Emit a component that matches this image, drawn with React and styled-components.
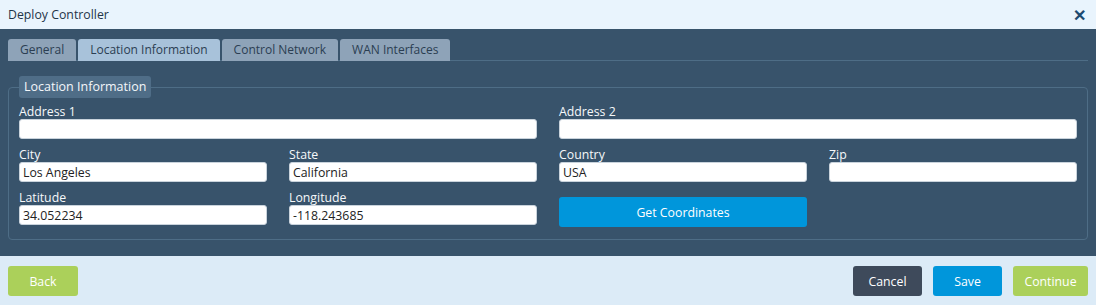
import React from 'react';
import styled, { createGlobalStyle } from 'styled-components';

const GlobalStyle = createGlobalStyle`
  html, body {
    margin: 0;
    padding: 0;
    background: #dcebf7;
  }
  body {
    font-family: "Open Sans", "Liberation Sans", sans-serif;
    font-size: 12px;
  }
`;

const Dialog = styled.div`
  width: 1096px;
  height: 305px;
  display: flex;
  flex-direction: column;
`;

const Header = styled.div`
  height: 29px;
  background: #e9f4fd;
  display: flex;
  align-items: center;
  justify-content: space-between;
  padding: 0 8px;
  color: #1f3448;
  font-size: 12.3px;
`;

const Close = styled.span`
  font-size: 16px;
  font-weight: bold;
  color: #1d4a70;
  line-height: 1;
  margin-right: 2px;
`;

const Body = styled.div`
  background: #38536b;
  padding: 10px 8px 0;
  height: 227px;
  box-sizing: border-box;
`;

const TabStrip = styled.div`
  display: flex;
  gap: 2px;
  border-bottom: 1px solid #4e6d86;
  height: 21px;
`;

const Tab = styled.div`
  height: 22px;
  line-height: 22px;
  padding: 0 12px;
  border-radius: 3px 3px 0 0;
  background: ${p => (p.$active ? '#a8c2da' : '#8ea3b8')};
  color: #2b3e52;
  font-size: 12px;
`;

const Fieldset = styled.fieldset`
  margin: 15px 0 0;
  border: 1px solid #4e6d86;
  border-radius: 4px;
  padding: 6px 10px 12px;
`;

const Legend = styled.legend`
  background: #4f6d87;
  color: #f4f7fa;
  border-radius: 3px;
  padding: 0 5px;
  height: 22px;
  line-height: 22px;
  font-size: 12.5px;
`;

const Grid = styled.div`
  display: grid;
  grid-template-columns: repeat(4, 248px);
  column-gap: 22px;
  row-gap: 8px;
`;

const Field = styled.div`
  grid-column: span ${p => p.$span || 1};
  display: flex;
  flex-direction: column;
`;

const Label = styled.label`
  color: #f6f8fa;
  font-size: 12.3px;
  line-height: 15px;
`;

const Input = styled.input`
  height: 20px;
  box-sizing: border-box;
  border: 1px solid #c9d3dc;
  border-radius: 3px;
  background: #fff;
  padding: 0 3px;
  font-family: inherit;
  font-size: 12.3px;
  color: #222;
  outline: none;
`;

const Button = styled.button`
  height: 30px;
  border: none;
  border-radius: 3px;
  color: #fff;
  font-family: inherit;
  font-size: 12.3px;
  padding: 0;
  width: ${p => p.$w}px;
  background: ${p => p.$bg};
  cursor: pointer;
`;

const CoordCell = styled.div`
  display: flex;
  padding-top: 7px;
  ${Button} { width: 100%; }
`;

const Footer = styled.div`
  flex: 1;
  background: #dcebf7;
  display: flex;
  align-items: flex-start;
  justify-content: space-between;
  padding: 10px 8px 0;
`;

const Actions = styled.div`
  display: flex;
  gap: 11px;
`;

const GREEN = '#abd05a';
const BLUE = '#0096db';
const DARK = '#3e4a5b';

const tabs = ['General', 'Location Information', 'Control Network', 'WAN Interfaces'];

export default function App() {
  return (
    <Dialog>
      <GlobalStyle />
      <Header>
        <span>Deploy Controller</span>
        <Close>✕</Close>
      </Header>
      <Body>
        <TabStrip>
          {tabs.map(t => (
            <Tab key={t} $active={t === 'Location Information'}>{t}</Tab>
          ))}
        </TabStrip>
        <Fieldset>
          <Legend>Location Information</Legend>
          <Grid>
            <Field $span={2}>
              <Label>Address 1</Label>
              <Input defaultValue="" />
            </Field>
            <Field $span={2}>
              <Label>Address 2</Label>
              <Input defaultValue="" />
            </Field>
            <Field>
              <Label>City</Label>
              <Input defaultValue="Los Angeles" />
            </Field>
            <Field>
              <Label>State</Label>
              <Input defaultValue="California" />
            </Field>
            <Field>
              <Label>Country</Label>
              <Input defaultValue="USA" />
            </Field>
            <Field>
              <Label>Zip</Label>
              <Input defaultValue="" />
            </Field>
            <Field>
              <Label>Latitude</Label>
              <Input defaultValue="34.052234" />
            </Field>
            <Field>
              <Label>Longitude</Label>
              <Input defaultValue="-118.243685" />
            </Field>
            <CoordCell>
              <Button $bg={BLUE}>Get Coordinates</Button>
            </CoordCell>
          </Grid>
        </Fieldset>
      </Body>
      <Footer>
        <Button $bg={GREEN} $w={70}>Back</Button>
        <Actions>
          <Button $bg={DARK} $w={69}>Cancel</Button>
          <Button $bg={BLUE} $w={69}>Save</Button>
          <Button $bg={GREEN} $w={75}>Continue</Button>
        </Actions>
      </Footer>
    </Dialog>
  );
}
